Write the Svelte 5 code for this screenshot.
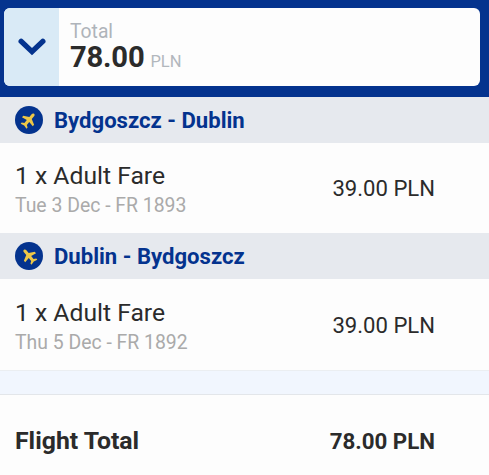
<script>
	const flights = [
		{ route: 'Bydgoszcz - Dublin', details: 'Tue 3 Dec - FR 1893', price: '39.00 PLN', inbound: false },
		{ route: 'Dublin - Bydgoszcz', details: 'Thu 5 Dec - FR 1892', price: '39.00 PLN', inbound: true }
	];
</script>

<div class="summary">
	<header class="top">
		<div class="total-box">
			<button class="toggle" aria-label="Toggle price breakdown">
				<svg viewBox="0 0 28 18" width="28" height="18">
					<path d="M3.2 3.4L14 13.6L24.8 3.4" />
				</svg>
			</button>
			<div class="total">
				<span class="total-label">Total</span>
				<div class="total-price">
					<strong>78.00</strong>
					<span class="currency">PLN</span>
				</div>
			</div>
		</div>
	</header>

	{#each flights as flight}
		<section>
			<h2 class="route">
				<svg class="plane" class:inbound={flight.inbound} viewBox="0 0 28 28" width="28" height="28">
					<circle cx="14" cy="14" r="14" />
					<path
						transform="translate(13.8 14.1) rotate(40) scale(0.75) translate(-11.5 -12)"
						d="M20.9 15v-2.8l-7.3-3.8V3.2c0-1.1-.8-2.1-2.1-2.1S9.4 2.1 9.4 3.2v5.2L2.1 12.2V15l7.3-1.4V18.6l-3 2V22.8l5.1-1.2 5.1 1.2v-2.2L13.6 18.6v-5L20.9 15z"
					/>
				</svg>
				<span class="route-name">{flight.route}</span>
			</h2>
			<div class="fare">
				<div class="fare-info">
					<span class="fare-name">1 x Adult Fare</span>
					<span class="fare-details">{flight.details}</span>
				</div>
				<span class="price">{flight.price}</span>
			</div>
		</section>
	{/each}

	<div class="divider"></div>

	<footer class="flight-total">
		<span class="flight-total-label">Flight Total</span>
		<span class="flight-total-price">78.00 PLN</span>
	</footer>
</div>

<style>
	:global(body) {
		background: #fdfdfd;
	}

	.summary {
		height: 475px;
		display: flex;
		flex-direction: column;
		overflow: hidden;
		color: #2b2b2b;
		font-family: Roboto, sans-serif;
		white-space: nowrap;
	}

	.top {
		box-sizing: border-box;
		height: 96.6px;
		padding: 8px 9px 11px 4px;
		background: #04338e;
	}

	.total-box {
		display: flex;
		height: 77.5px;
		border-radius: 6px;
		background: #fdfdfd;
		overflow: hidden;
	}

	.toggle {
		width: 55px;
		padding: 0;
		border: none;
		background: #d9eaf6;
		display: flex;
		align-items: center;
		justify-content: center;
	}

	.toggle svg {
		fill: none;
		stroke: #04338e;
		stroke-width: 5.4;
		stroke-linecap: round;
		stroke-linejoin: miter;
	}

	.total {
		padding: 12px 0 0 11px;
	}

	.total-label {
		display: block;
		font-size: 19.3px;
		line-height: 23px;
		color: #afb4ba;
	}

	.total-price {
		display: flex;
		align-items: baseline;
		gap: 6px;
		line-height: 28px;
	}

	.total-price strong {
		font-size: 29.2px;
		font-weight: 700;
		letter-spacing: -0.2px;
	}

	.currency {
		font-size: 16.5px;
		color: #b2b7bd;
	}

	.route {
		box-sizing: border-box;
		display: flex;
		align-items: center;
		gap: 11px;
		height: 46px;
		margin: 0;
		padding-left: 15px;
		background: #e6e9ee;
		color: #04338e;
		font-size: 22.1px;
		font-weight: 700;
	}

	.plane circle {
		fill: #04338e;
	}

	.plane path {
		fill: #edc747;
	}

	.inbound {
		transform: scaleX(-1);
	}

	.fare {
		box-sizing: border-box;
		display: flex;
		align-items: center;
		justify-content: space-between;
		height: 90.8px;
		padding: 0 54px 0 15px;
	}

	.fare-info {
		display: flex;
		flex-direction: column;
		padding-top: 5px;
	}

	.fare-name {
		font-size: 24.7px;
		line-height: 30px;
	}

	.fare-details {
		font-size: 19.4px;
		line-height: 29px;
		color: #aaa;
	}

	.price {
		font-size: 22.1px;
	}

	.divider {
		box-sizing: border-box;
		height: 25px;
		border-top: 1px solid #ebeef1;
		border-bottom: 1px solid #e3e6ea;
		background: #f1f6fe;
	}

	.flight-total {
		flex: 1;
		display: flex;
		align-items: center;
		justify-content: space-between;
		padding: 11px 54px 0 15px;
		font-weight: 700;
	}

	.flight-total-label {
		font-size: 24.8px;
	}

	.flight-total-price {
		font-size: 22.3px;
	}
</style>
